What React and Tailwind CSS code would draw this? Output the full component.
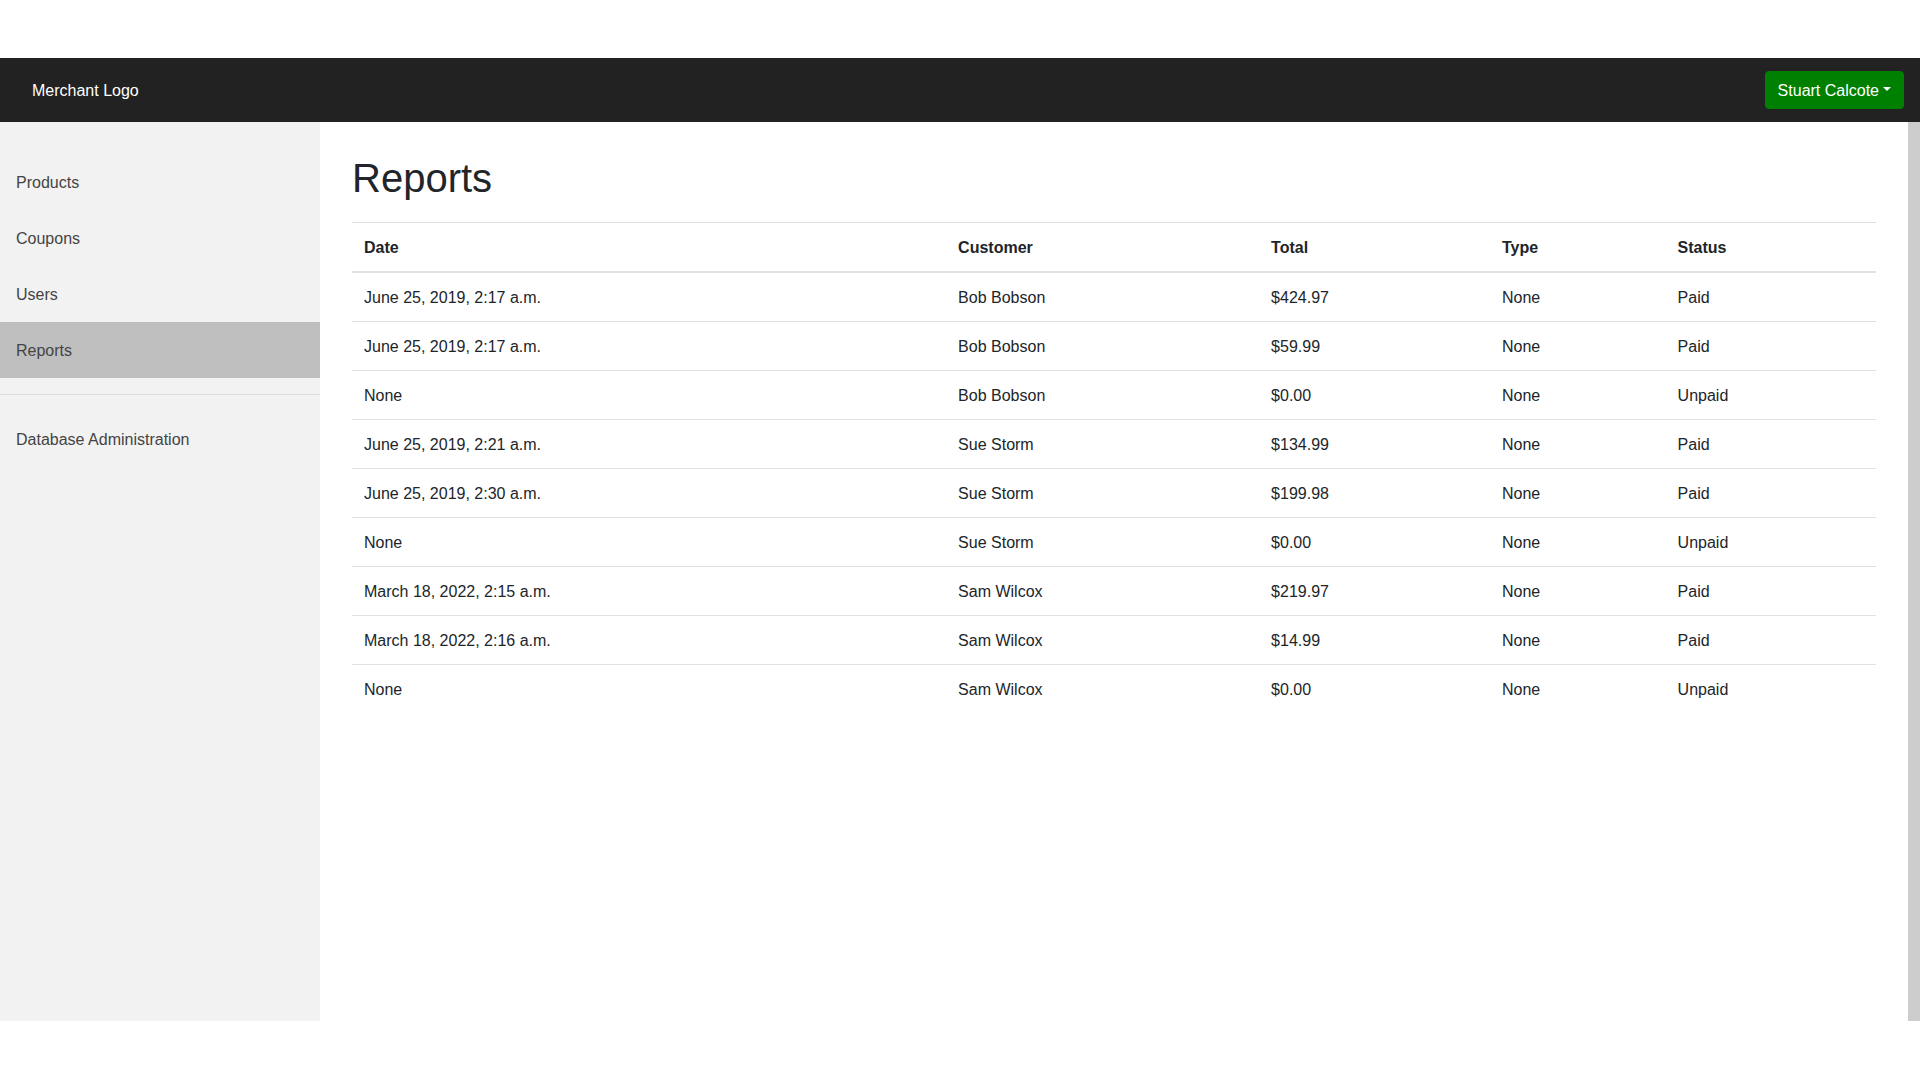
import React from "react";

const rows = [
  ["June 25, 2019, 2:17 a.m.", "Bob Bobson", "$424.97", "None", "Paid"],
  ["June 25, 2019, 2:17 a.m.", "Bob Bobson", "$59.99", "None", "Paid"],
  ["None", "Bob Bobson", "$0.00", "None", "Unpaid"],
  ["June 25, 2019, 2:21 a.m.", "Sue Storm", "$134.99", "None", "Paid"],
  ["June 25, 2019, 2:30 a.m.", "Sue Storm", "$199.98", "None", "Paid"],
  ["None", "Sue Storm", "$0.00", "None", "Unpaid"],
  ["March 18, 2022, 2:15 a.m.", "Sam Wilcox", "$219.97", "None", "Paid"],
  ["March 18, 2022, 2:16 a.m.", "Sam Wilcox", "$14.99", "None", "Paid"],
  ["None", "Sam Wilcox", "$0.00", "None", "Unpaid"],
];

const links = ["Products", "Coupons", "Users", "Reports"];

const SideLink = ({ label, active }) => (
  <a
    href="#"
    className={`block h-14 px-4 pt-[17px] leading-6 text-[#444] ${active ? "bg-[#bfbfbf]" : ""}`}
  >
    {label}
  </a>
);

const App = () => {
  return (
    <div className="min-h-screen bg-white pt-[58px] font-['Liberation_Sans',sans-serif] text-base text-[#212529]">
      <nav className="flex h-16 items-center justify-between bg-[#222] pl-8 pr-4">
        <a href="#" className="pt-[2px] text-white">
          Merchant Logo
        </a>
        <button className="h-[38px] rounded border border-[#008000] bg-[#008000] px-3 pt-[1px] text-white">
          Stuart Calcote
          <span className="ml-[4px] inline-block h-0 w-0 border-x-[4.8px] border-t-[4.8px] border-x-transparent border-t-white align-[5px]"></span>
        </button>
      </nav>

      <div className="flex h-[899px]">
        <aside className="w-80 shrink-0 bg-[#f2f2f2] pt-8">
          {links.map((label) => (
            <SideLink key={label} label={label} active={label === "Reports"} />
          ))}
          <hr className="my-4 border-t border-[#ddd]" />
          <SideLink label="Database Administration" />
        </aside>

        <main className="flex-1 px-8 pt-8">
          <h1 className="mb-5 text-[40px] leading-12 font-normal">Reports</h1>
          <table className="w-full table-fixed border-collapse">
            <thead>
              <tr>
                <th className="w-[594.1px] border-t border-b-2 border-[#dee2e6] px-3 pt-[13px] pb-[11px] text-left">Date</th>
                <th className="w-[313px] border-t border-b-2 border-[#dee2e6] px-3 pt-[13px] pb-[11px] text-left">Customer</th>
                <th className="w-[230.9px] border-t border-b-2 border-[#dee2e6] px-3 pt-[13px] pb-[11px] text-left">Total</th>
                <th className="w-[175.6px] border-t border-b-2 border-[#dee2e6] px-3 pt-[13px] pb-[11px] text-left">Type</th>
                <th className="border-t border-b-2 border-[#dee2e6] px-3 pt-[13px] pb-[11px] text-left">Status</th>
              </tr>
            </thead>
            <tbody>
              {rows.map((row, i) => (
                <tr key={i}>
                  {row.map((cell, j) => (
                    <td key={j} className={`px-3 pt-[13px] pb-[11px] ${i > 0 ? "border-t border-[#dee2e6]" : ""}`}>
                      {cell}
                    </td>
                  ))}
                </tr>
              ))}
            </tbody>
          </table>
        </main>

        <div className="w-3 shrink-0 bg-[#cdcdcd]"></div>
      </div>
    </div>
  );
};

export default App;
